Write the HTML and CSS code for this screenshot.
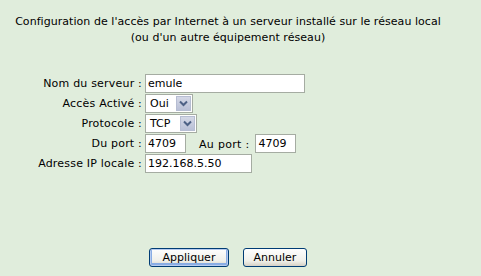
FILE: index.html
```html
<!DOCTYPE html>
<html>
<head>
<meta http-equiv="Content-Type" content="text/html; charset=utf-8"/>
<title>Configuration NAT</title>
<link rel="stylesheet" href="styles.css">
</head>
<body>
<div class="page">
  <p class="intro">Configuration de l'accès par Internet à un serveur installé sur le réseau local<br/>
  (ou d'un autre équipement réseau)</p>

  <div class="form">
    <label class="lbl">Nom du serveur :</label>
    <div class="field"><span class="txt w-name">emule</span></div>

    <label class="lbl">Accès Activé :</label>
    <div class="field">
      <span class="sel w-oui"><span class="val">Oui</span><span class="arrow"><svg width="9" height="7" viewBox="0 0 9 7"><path d="M1 1.5 L4.5 5 L8 1.5" fill="none" stroke="#4d6185" stroke-width="2"/></svg></span></span>
    </div>

    <label class="lbl">Protocole :</label>
    <div class="field">
      <span class="sel w-tcp"><span class="val">TCP</span><span class="arrow"><svg width="9" height="7" viewBox="0 0 9 7"><path d="M1 1.5 L4.5 5 L8 1.5" fill="none" stroke="#4d6185" stroke-width="2"/></svg></span></span>
    </div>

    <label class="lbl">Du port :</label>
    <div class="field">
      <span class="txt w-port">4709</span>
      <span class="sub">Au port :</span>
      <span class="txt w-port">4709</span>
    </div>

    <label class="lbl">Adresse IP locale :</label>
    <div class="field"><span class="txt w-ip">192.168.5.50</span></div>
  </div>

  <div class="actions">
    <button class="btn default">Appliquer</button>
    <button class="btn">Annuler</button>
  </div>
</div>
</body>
</html>
```

FILE: styles.css
```css
body {
  margin: 0;
  background-color: #e0eddc;
  font-family: "DejaVu Sans", Verdana, sans-serif;
  font-size: 11px;
  color: #000;
}

.page {
  width: 456px;
}

.intro {
  margin: 0;
  padding-top: 14px;
  text-align: center;
  line-height: 16px;
  letter-spacing: 0.05px;
}

.form {
  display: grid;
  grid-template-columns: 142px auto;
  grid-auto-rows: 20px;
  column-gap: 3px;
  margin-top: 28px;
}

.lbl {
  text-align: right;
  line-height: 19px;
  white-space: nowrap;
  letter-spacing: 0.2px;
}

.field {
  display: flex;
  align-items: flex-start;
}

.txt {
  box-sizing: border-box;
  height: 19px;
  line-height: 17px;
  padding-left: 2px;
  background: #fff;
  border: 1px solid #a5aca2;
}

.w-name { width: 160px; }
.w-port { width: 41px; }
.w-ip { width: 107px; }

.sub {
  margin: 0 6px 0 13px;
  line-height: 21px;
  letter-spacing: 0.3px;
}

.sel {
  box-sizing: border-box;
  display: flex;
  align-items: center;
  height: 19px;
  background: #fff;
  border: 1px solid #a5aca2;
  padding: 1px;
}

.sel .val {
  flex: 1;
  padding-left: 3px;
}

.w-oui { width: 48px; }
.w-tcp { width: 52px; }

.arrow {
  box-sizing: border-box;
  width: 15px;
  height: 15px;
  display: flex;
  align-items: center;
  justify-content: center;
  background: linear-gradient(#d4d8e6, #b9c0d6);
  border: 1px solid #b6bdd2;
}

.actions {
  display: flex;
  justify-content: center;
  gap: 14px;
  margin-top: 74px;
}

.btn {
  box-sizing: border-box;
  height: 19px;
  padding: 0 8px;
  font-family: "DejaVu Sans", Verdana, sans-serif;
  font-size: 11px;
  color: #000;
  border: 1px solid #003c74;
  border-radius: 3px;
  background: linear-gradient(#fefefe, #f0f0ea 70%, #d6d0c5);
}

.btn.default {
  width: 80px;
  box-shadow: inset 0 0 0 1px #b7cbf0, inset 0 -1px 0 2px #89ade4;
}

.btn + .btn {
  width: 64px;
}
```
